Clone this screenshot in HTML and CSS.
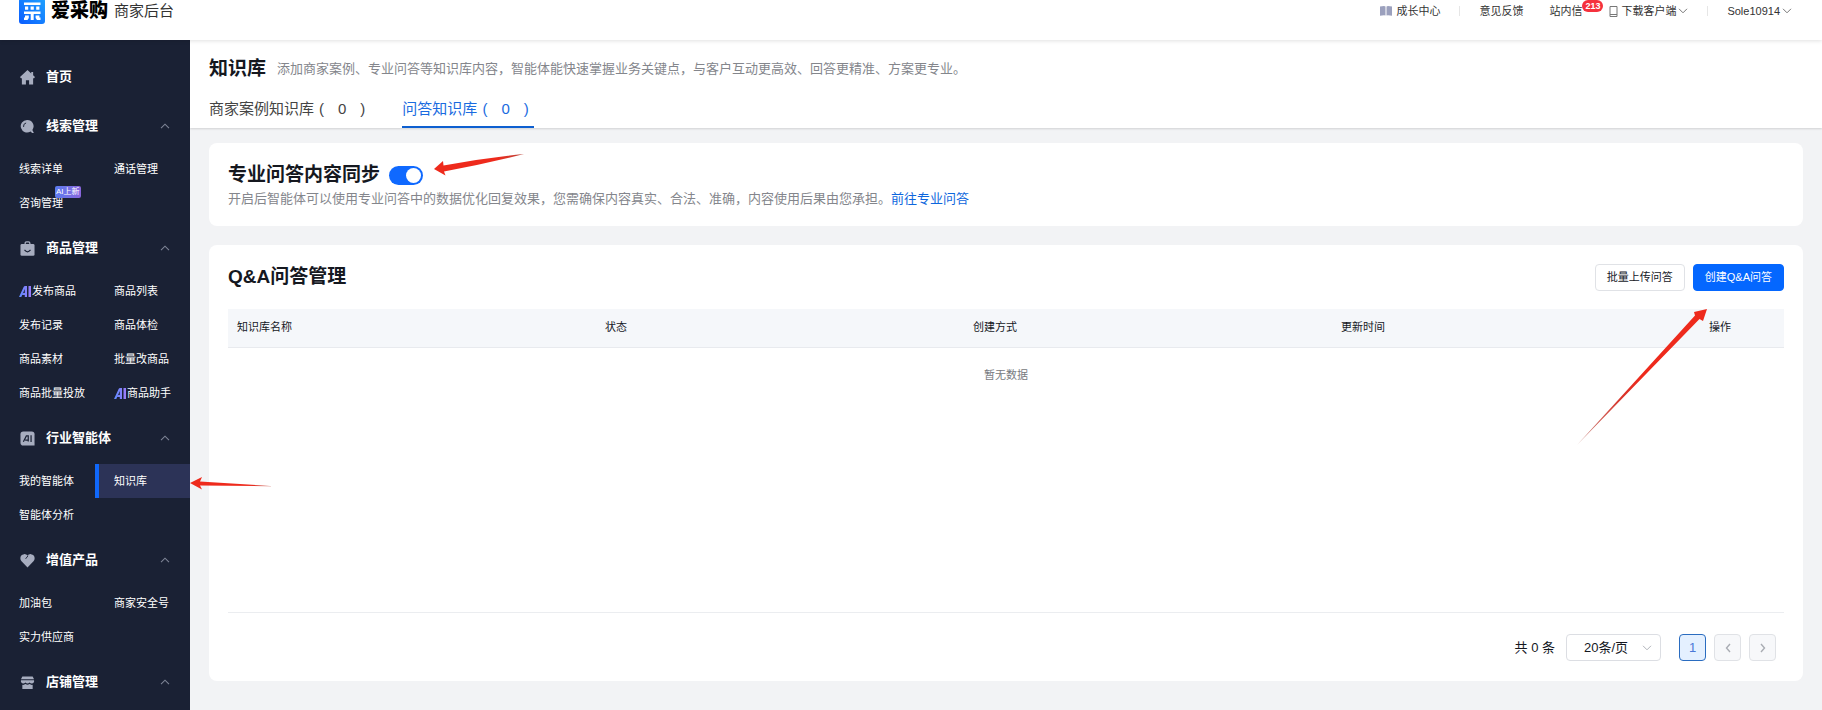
FILE: index.html
```html
<!DOCTYPE html>
<html lang="zh-CN">
<head>
<meta charset="utf-8">
<title>爱采购 商家后台 - 知识库</title>
<link rel="stylesheet" href="styles.css">
</head>
<body>
<svg class="defs" aria-hidden="true">
  <defs>
    <linearGradient id="ai-fill" x1="0" y1="0" x2="1" y2="0"><stop offset="0" stop-color="#5d8bff"/><stop offset="1" stop-color="#9b7bfa"/></linearGradient>
    <linearGradient id="logo-fill" x1="0" y1="1" x2="1" y2="0"><stop offset="0" stop-color="#0a5cff"/><stop offset="1" stop-color="#1fa2ff"/></linearGradient>
    <linearGradient id="tail-left" x1="1" y1="0" x2="0" y2="0"><stop offset="0" stop-color="#b8463c"/><stop offset=".3" stop-color="#ee2a1c"/></linearGradient>
    <linearGradient id="tail-diag" x1="0" y1="1" x2="1" y2="0"><stop offset="0" stop-color="#c98a84"/><stop offset=".35" stop-color="#d8342a"/><stop offset=".5" stop-color="#ee2a1c"/></linearGradient>
    <symbol id="ai" viewBox="0 0 12 11"><path d="M0 11 4.500 1.200Q5 0 6.200 0H8v11H5.800V9H3.200l1-2h1.600V3L2.300 11zM9.500 0H12v11H9.500z" fill="url(#ai-fill)"/></symbol>
    <symbol id="up" viewBox="0 0 10 6"><path d="M1 5.200 5 1.200l4 4" fill="none" stroke="currentColor" stroke-width="1.100"/></symbol>
    <symbol id="down" viewBox="0 0 10 6"><path d="M1 .8 5 4.800l4-4" fill="none" stroke="currentColor" stroke-width="1"/></symbol>
  </defs>
</svg>

<header class="topbar">
  <a class="brand" href="#">
    <svg class="brand-mark" viewBox="0 0 26 26" aria-hidden="true">
      <rect width="26" height="26" rx="3" fill="url(#logo-fill)"/>
      <path d="M5 4.500h16.500v2.500H5zM6 8.500h3.200v3.300H6zM11.600 8.500h3.200v3.300h-3.200zM17.200 8.500h3.200v3.300h-3.200zM5 13.500h16.500v2.500H5zM11.700 16h3v6h-3zM6 17.500h3.800V20L8.500 22H5v-2.500h1zM16.600 17.500h3.800v2h1.100V22H18l-1.400-2z" fill="#fff"/>
    </svg>
    <span class="brand-name">爱采购</span>
    <span class="brand-sub">商家后台</span>
  </a>
  <nav class="tools">
    <a class="tool" href="#"><svg class="book" viewBox="0 0 12 10" aria-hidden="true"><path d="M0 .5 4 0l1.500.6v9L4 9.300l-4 .5zM12 .5 8 0 6.500.6v9L8 9.300l4 .5z" fill="#9ba0bd"/></svg>成长中心</a>
    <span class="rule"></span>
    <a class="tool" href="#">意见反馈</a>
    <a class="tool inbox" href="#">站内信<span class="count">213</span></a>
    <a class="tool client" href="#"><svg class="phone" viewBox="0 0 9 11" aria-hidden="true"><path d="M1 .5h7v10H1zM1 8.500h7" fill="none" stroke="#777"/></svg>下载客户端<svg class="caret"><use href="#down"/></svg></a>
    <span class="rule"></span>
    <a class="tool user" href="#">Sole10914<svg class="caret"><use href="#down"/></svg></a>
  </nav>
</header>

<div class="shell">
  <nav class="sidebar">
    <a class="home" href="#"><svg class="glyph" viewBox="0 0 16 16" aria-hidden="true"><path d="M8 0 12 3.600V2h2v3.500l2 2-1 1.200h-1V15.500H9.700V11H6.300v4.500H2V8.700H1L0 7.500z" fill="currentColor"/></svg>首页</a>

    <section class="group">
      <button class="group-head" type="button"><svg class="glyph" viewBox="0 0 16 16" aria-hidden="true"><path d="M7.500 1a6.700 6.700 0 1 0 3.800 12.200l1.600 1.600h1.900l-1.600-3.200A6.700 6.700 0 0 0 7.500 1z" fill="currentColor"/><path d="M3.800 8.500A3.800 3.800 0 0 1 6.500 4.200" fill="none" stroke="#1a2134"/></svg>线索管理<svg class="fold"><use href="#up"/></svg></button>
      <div class="links">
        <a href="#">线索详单</a><a href="#">通话管理</a>
        <a class="tagged" href="#">咨询管理<span class="tag">AI上新</span></a>
      </div>
    </section>

    <section class="group">
      <button class="group-head" type="button"><svg class="glyph" viewBox="0 0 16 16" aria-hidden="true"><path d="M5.500 4V2.500q0-1.500 1.500-1.500h2q1.500 0 1.500 1.500V4" fill="none" stroke="currentColor" stroke-width="1.400"/><rect x=".5" y="3.300" width="15" height="12.500" rx="1.500" fill="currentColor"/><path d="M4.800 9.500q3.200 4 6.400 0" fill="none" stroke="#1a2134" stroke-width="1.300"/></svg>商品管理<svg class="fold"><use href="#up"/></svg></button>
      <div class="links">
        <a href="#"><svg class="ai"><use href="#ai"/></svg>发布商品</a><a href="#">商品列表</a>
        <a href="#">发布记录</a><a href="#">商品体检</a>
        <a href="#">商品素材</a><a href="#">批量改商品</a>
        <a href="#">商品批量投放</a><a href="#"><svg class="ai"><use href="#ai"/></svg>商品助手</a>
      </div>
    </section>

    <section class="group">
      <button class="group-head" type="button"><svg class="glyph" viewBox="0 0 16 16" aria-hidden="true"><path d="M3.500.5h9q3 0 3 3v12h-12q-3 0-3-3v-9q0-3 3-3z" fill="currentColor"/><path d="M3.600 11.500 6.800 5.300h2v6M5.500 9.800h3M11.800 4.600v7" fill="none" stroke="#1a2134" stroke-width="1.300"/></svg>行业智能体<svg class="fold"><use href="#up"/></svg></button>
      <div class="links">
        <a href="#">我的智能体</a><a class="current" href="#" aria-current="page">知识库</a>
        <a href="#">智能体分析</a>
      </div>
    </section>

    <section class="group">
      <button class="group-head" type="button"><svg class="glyph" viewBox="0 0 16 16" aria-hidden="true"><path d="M8 15.500 1.400 8.600C-.6 6 .3 1.500 4.300 1.200 6 1.100 7.300 2 8 3c.7-1 2-1.900 3.700-1.800 4 .3 4.900 4.800 2.900 7.400z" fill="currentColor"/><path d="M8.500 3 6 6.200" stroke="#1a2134" stroke-width="1"/></svg>增值产品<svg class="fold"><use href="#up"/></svg></button>
      <div class="links">
        <a href="#">加油包</a><a href="#">商家安全号</a>
        <a href="#">实力供应商</a>
      </div>
    </section>

    <section class="group">
      <button class="group-head" type="button"><svg class="glyph" viewBox="0 0 16 16" aria-hidden="true"><path d="M2.500 1.500h11l1.500 3H1zM1 5.500h14v2q-1.200 1.600-2.500 1.600T10.200 8Q9.200 9 8 9T5.800 8Q4.800 9.100 3.500 9.100T1 7.500z" fill="currentColor"/><path d="M2.500 10.500q2 .3 3.300-.8Q8 11 10.200 9.700q1.300 1.100 3.300.8v4.500h-11z" fill="currentColor"/></svg>店铺管理<svg class="fold"><use href="#up"/></svg></button>
    </section>
    <svg class="arrow arrow-nav" viewBox="0 0 84 16" aria-hidden="true"><path d="M0 7 12 1 10 5.500 84 10.200 10 9.500l2 4z" fill="url(#tail-left)"/></svg>
  </nav>

  <main class="content">
    <div class="pagehead">
      <div class="heading">
        <h1>知识库</h1>
        <p>添加商家案例、专业问答等知识库内容，智能体能快速掌握业务关键点，与客户互动更高效、回答更精准、方案更专业。</p>
      </div>
      <div class="tabs" role="tablist">
        <button class="tab" type="button" role="tab" aria-selected="false"><span>商家案例知识库</span><span class="num"><span>(</span><span>0</span><span>)</span></span></button>
        <button class="tab active" type="button" role="tab" aria-selected="true"><span>问答知识库</span><span class="num"><span>(</span><span>0</span><span>)</span></span></button>
      </div>
    </div>

    <section class="card sync">
      <div class="sync-row">
        <h2><label for="sync">专业问答内容同步</label></h2>
        <input class="switch" id="sync" type="checkbox" role="switch" checked>
        <svg class="arrow arrow-sync" viewBox="0 0 90 24" aria-hidden="true"><path d="M0 16 9 8 9.500 12.500Q50 5 90 1 50 11 10 18.500l1.500 4z" fill="url(#tail-left)"/></svg>
      </div>
      <p>开启后智能体可以使用专业问答中的数据优化回复效果，您需确保内容真实、合法、准确，内容使用后果由您承担。<a href="#">前往专业问答</a></p>
    </section>

    <section class="card manage">
      <div class="manage-head">
        <h2>Q&amp;A问答管理</h2>
        <div class="actions">
          <button class="btn" type="button">批量上传问答</button>
          <button class="btn primary" type="button">创建Q&amp;A问答</button>
        </div>
      </div>
      <div class="table-area">
        <table>
          <thead><tr><th>知识库名称</th><th>状态</th><th>创建方式</th><th>更新时间</th><th class="ops">操作</th></tr></thead>
          <tbody><tr><td colspan="5">暂无数据</td></tr></tbody>
        </table>
        <svg class="arrow arrow-create" viewBox="0 0 130 136" aria-hidden="true"><path d="M130 0 126 12 122.500 10 0 136 118 6.500 117 3z" fill="url(#tail-diag)"/></svg>
      </div>
      <div class="pager">
        <span>共 0 条</span>
        <div class="size">
          <select aria-label="每页条数"><option>20条/页</option></select>
          <svg class="caret"><use href="#down"/></svg>
        </div>
        <button class="page on" type="button">1</button>
        <button class="page" type="button" aria-label="上一页"><svg viewBox="0 0 6 10"><path d="M5 1 1.500 5 5 9" fill="none" stroke="currentColor" stroke-width="1.400"/></svg></button>
        <button class="page" type="button" aria-label="下一页"><svg viewBox="0 0 6 10"><path d="M1 1l3.500 4L1 9" fill="none" stroke="currentColor" stroke-width="1.400"/></svg></button>
      </div>
    </section>
  </main>
</div>
</body>
</html>
```

FILE: styles.css
```css
* { box-sizing: border-box; }
body {
  margin: 0;
  min-height: 100vh;
  display: flex;
  flex-direction: column;
  background: #f2f3f5;
  color: #15181f;
  font: 11px/16px "Liberation Sans", "Noto Sans CJK SC", sans-serif;
}
html { overflow: hidden; }
a { color: inherit; text-decoration: none; }
button, input, select { font: inherit; color: inherit; margin: 0; }
button { cursor: pointer; padding: 0; border: 0; background: none; }
h1, h2, p { margin: 0; }
h1, h2 { font-size: 19px; line-height: 28px; font-weight: 600; }
.defs { position: absolute; width: 0; height: 0; }

.topbar {
  position: relative;
  z-index: 2;
  display: flex;
  justify-content: space-between;
  align-items: flex-start;
  height: 40px;
  padding: 0 30px 0 19px;
  background: #fff;
  box-shadow: 0 1px 4px rgba(0, 0, 0, .12);
}
.brand { display: flex; align-items: center; height: 22px; }
.brand-mark { width: 26px; height: 26px; flex: none; }
.brand-name { margin-left: 6px; font-size: 19px; font-weight: 900; color: #000; }
.brand-sub { margin-left: 6px; font-size: 15px; color: #333; }
.tools { display: flex; align-items: center; height: 22px; color: #333; }
.tool { display: flex; align-items: center; position: relative; }
.rule { width: 1px; height: 10px; margin: 0 19px; background: #e6e6e6; }
.book { width: 12px; height: 10px; margin-right: 4px; }
.inbox { margin-left: 26px; }
.count {
  position: absolute;
  left: 100%;
  top: -3px;
  padding: 0 3px;
  border-radius: 6px;
  background: #f5313d;
  color: #fff;
  font-size: 9px;
  line-height: 12px;
  font-weight: 700;
}
.client { margin-left: 27px; }
.phone { width: 9px; height: 11px; margin-right: 3px; }
.caret { width: 10px; height: 6px; margin-left: 2px; color: #777; }

.shell { display: flex; flex: 1; }
.sidebar {
  position: relative;
  flex: none;
  width: 190px;
  padding-top: 14px;
  background: #1a2134;
  color: #fff;
}
.home, .group-head {
  display: flex;
  align-items: center;
  width: 100%;
  padding: 0 20px;
  font-size: 13px;
  font-weight: 700;
  text-align: left;
}
.home { height: 46px; }
.group-head { height: 52px; }
.glyph { width: 15px; height: 15px; margin-right: 11px; color: #a7adbf; }
.fold { width: 10px; height: 6px; margin-left: auto; color: #7e8496; }
.links { display: grid; grid-template-columns: 1fr 1fr; padding-bottom: 2px; }
.links a {
  display: flex;
  align-items: center;
  height: 34px;
  padding-left: 19px;
  position: relative;
  white-space: nowrap;
}
.links .current { padding-left: 15px; border-left: 4px solid #1068fa; background: #2c3357; }
.ai { width: 12px; height: 11px; margin-right: 1px; }
.tag {
  position: absolute;
  left: 55px;
  top: 0;
  padding: 0 1px;
  border-radius: 2px;
  background: linear-gradient(90deg, #5b7cf0, #8a66dc);
  font-size: 8px;
  line-height: 12px;
}

.content { flex: 1; min-width: 0; }
.pagehead {
  padding: 15px 19px 0;
  background: #fff;
  box-shadow: 0 1px 2px rgba(0, 0, 0, .14);
}
.heading { display: flex; align-items: center; gap: 11px; }
.heading p, .sync p { font-size: 13px; line-height: 20px; color: #84868c; }
.tabs { display: flex; gap: 32px; margin-top: 7px; }
.tab {
  display: flex;
  height: 38px;
  padding-top: 8px;
  border-bottom: 2px solid transparent;
  font-size: 15px;
  line-height: 22px;
  color: #444;
}
.tab .num { display: flex; gap: 14px; padding: 0 5px; }
.tab.active { color: #1a6be0; border-color: #0d5fd0; }

.card { margin: 15px 19px 0; padding: 0 19px; border-radius: 8px; background: #fff; }
.sync { padding-top: 18px; padding-bottom: 18px; }
.sync-row { position: relative; display: flex; align-items: center; gap: 9px; }
.switch {
  appearance: none;
  width: 34px;
  height: 19px;
  padding: 2px;
  border-radius: 10px;
  background: #0f69ff;
  display: flex;
  justify-content: flex-end;
}
.switch::before { content: ""; width: 15px; height: 15px; border-radius: 50%; background: #fff; }
.sync p { line-height: 19px; }
.sync p a { color: #0d66dd; }

.manage { margin-top: 19px; padding-bottom: 20px; }
.manage-head { display: flex; justify-content: space-between; align-items: center; padding: 18px 0; }
.actions { display: flex; gap: 8px; }
.btn {
  height: 27px;
  padding: 0 11px;
  border: 1px solid #e0e2e6;
  border-radius: 4px;
  background: #fff;
}
.btn.primary { border-color: #0467ff; background: #0467ff; color: #fff; }
.table-area { position: relative; min-height: 304px; border-bottom: 1px solid #ebedf0; }
table { width: 100%; border-collapse: collapse; table-layout: fixed; }
th {
  height: 38px;
  padding: 0 9px 1px;
  border-bottom: 1px solid #e8eaee;
  background: #f5f7fa;
  font-weight: 400;
  text-align: left;
}
.ops { width: 84px; }
td { height: 56px; padding: 0; text-align: center; color: #777a80; }
.pager {
  display: flex;
  justify-content: flex-end;
  align-items: center;
  gap: 8px;
  padding: 21px 8px 0 0;
  font-size: 13px;
}
.size { position: relative; margin: 0 10px 0 3px; }
.size select {
  appearance: none;
  display: block;
  width: 95px;
  height: 27px;
  padding: 0 17px;
  border: 1px solid #dcdee3;
  border-radius: 4px;
  background: #fff;
}
.size .caret { position: absolute; right: 9px; top: 11px; color: #b0b3ba; }
.page {
  display: flex;
  align-items: center;
  justify-content: center;
  width: 27px;
  height: 27px;
  border: 1px solid #e0e2e6;
  border-radius: 4px;
  background: #f7f8fa;
  color: #a9acb3;
}
.page svg { width: 6px; height: 10px; }
.page.on { border-color: #2a6cc0; background: #e4f0ff; color: #4a78d8; }

.arrow { position: absolute; z-index: 3; overflow: visible; pointer-events: none; }
.arrow-nav { left: 100%; top: 436px; width: 84px; height: 16px; }
.arrow-sync { left: 206px; top: -8px; width: 90px; height: 24px; }
.arrow-create { right: 77px; top: 0; width: 130px; height: 136px; }
```
